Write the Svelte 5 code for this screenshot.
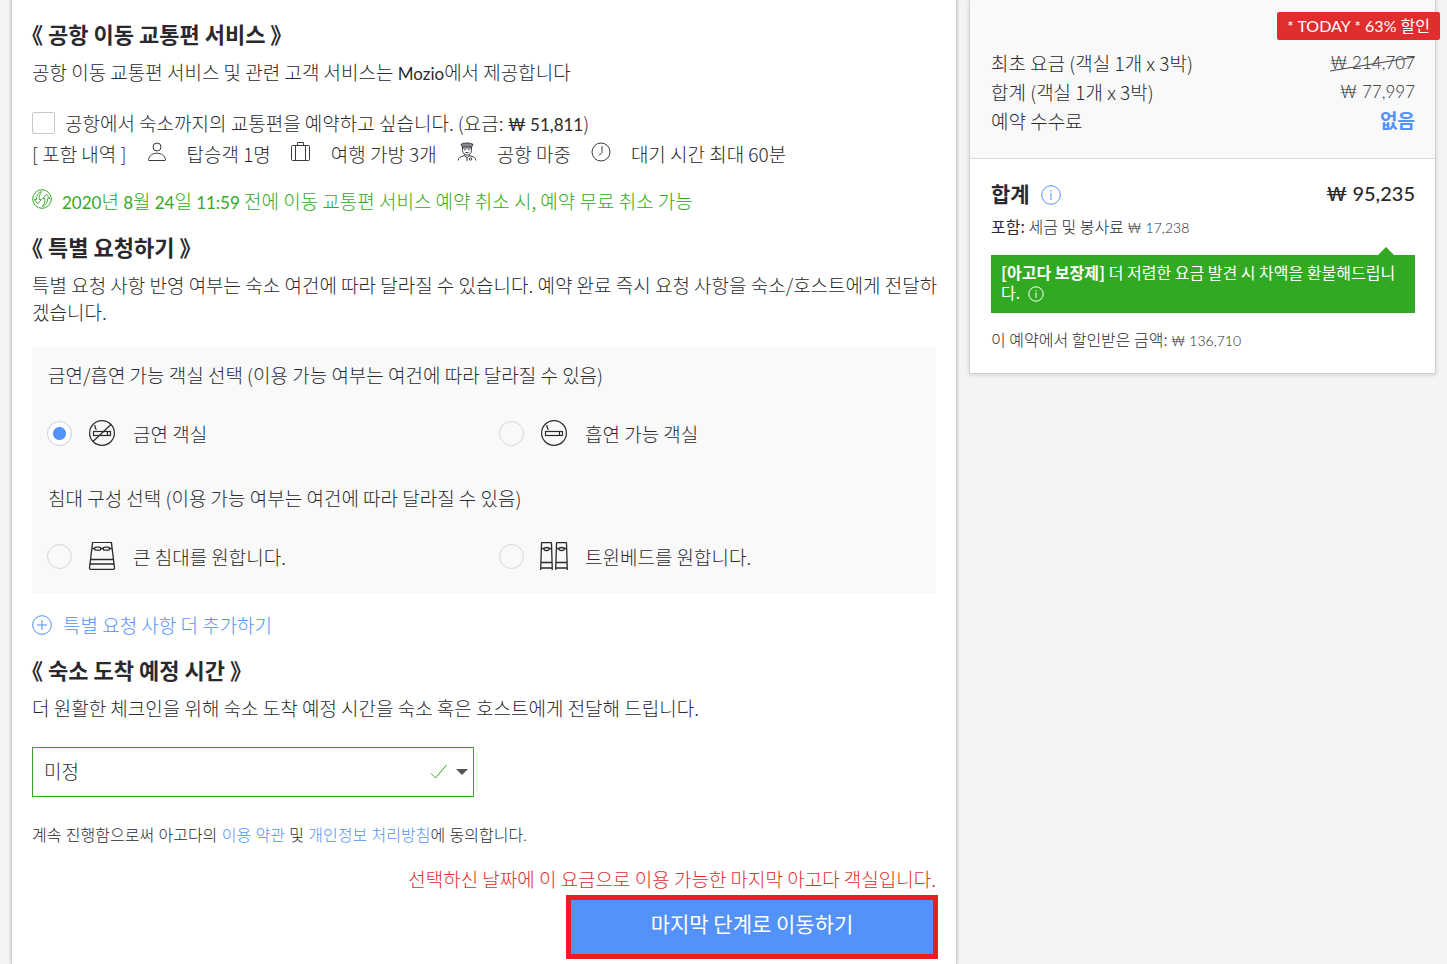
<script>
  let transfer = $state(false);
  let smoking = $state('non');
  let bed = $state('');
  let arrival = $state('미정');

  const included = [
    { icon: 'person', text: '탑승객 1명' },
    { icon: 'bag', text: '여행 가방 3개' },
    { icon: 'driver', text: '공항 마중' },
    { icon: 'clock', text: '대기 시간 최대 60분' },
  ];

  const arrivalTimes = ['미정', '14:00 - 15:00', '15:00 - 16:00', '16:00 - 17:00', '17:00 - 18:00'];
</script>

{#snippet cigarette(crossed)}
  <svg class="option-icon" width="28" height="28" viewBox="0 0 28 28" fill="none" stroke="#2a2a2e" stroke-width="1.2" aria-hidden="true">
    <circle cx="14" cy="14" r="12.4" />
    <rect x="5.5" y="12.5" width="17" height="4" />
    <path d="M19.500 12.500v4M8 11c.6-1.400-1.600-2-1-5" />
    {#if crossed}
      <path d="M5 22.500L23 5.500" />
    {/if}
  </svg>
{/snippet}

<div class="page">
  <main class="booking">
    <section>
      <h2>《 공항 이동 교통편 서비스 》</h2>
      <p>공항 이동 교통편 서비스 및 관련 고객 서비스는 <span class="latin">Mozio</span>에서 제공합니다</p>

      <label class="transfer">
        <input type="checkbox" bind:checked={transfer} />
        <span>공항에서 숙소까지의 교통편을 예약하고 싶습니다. (요금: <span class="latin">₩ 51,811</span>)</span>
      </label>

      <div class="included">
        <span>[ 포함 내역 ]</span>
        {#each included as item}
          <svg class="included-icon" width="20" height="20" viewBox="0 0 20 20" fill="none" stroke="#3c3c40" stroke-width="1" aria-hidden="true">
            {#if item.icon === 'person'}
              <circle cx="10" cy="5" r="4" />
              <path d="M2 18.500c-.4 0-.6-.3-.5-.8.6-4 4-6.500 8.500-6.500s7.900 2.500 8.500 6.500c.1.500-.1.800-.5.800z" />
            {:else if item.icon === 'bag'}
              <rect x=".5" y="3.500" width="18" height="15" rx="1" />
              <path d="M4.500 3.500v15M14.500 3.500v15M6.500 3.500v-3h6v3" />
            {:else if item.icon === 'driver'}
              <path d="M4 2.500C6 .5 14 .5 16 2.500l-1.200 2.300H5.200z" fill="#8c8c90" />
              <path d="M5.500 5v3.500c0 2.400 2 4.500 4.500 4.500s4.500-2.100 4.500-4.500V5M5.500 6h9M7.200 7.800h1.600M11.200 7.800h1.600M8.500 10.500h3" />
              <path d="M7.500 12.500v1.300L10 15.500l2.500-1.700v-1.300M7.500 13.800c-4 .5-6 1.700-6.500 4.700M12.500 13.800c4 .5 6 1.700 6.500 4.700M10 15.500v3.500" />
              <circle cx="13.500" cy="17" r="1.200" />
            {:else}
              <circle cx="10" cy="10" r="9" />
              <path d="M11 4v6.500l-3 3" />
            {/if}
          </svg>
          <span>{item.text}</span>
        {/each}
      </div>

      <div class="free-cancel">
        <svg class="raised" width="20" height="20" viewBox="0 0 20 20" fill="none" stroke="#32a923" aria-hidden="true">
          <circle cx="10" cy="10" r="9.300" />
          <path d="M9.500 2.500C6 3.500 4.300 6.500 4.500 10.500H2.300l3.500 4.200 3.500-4.200H7.200C7 7.500 7.800 5 9.500 2.500z" stroke-width=".9" />
          <path d="M10.500 17.500c2-2.300 2.700-4.800 2.300-8h-2l3.500-4.200 3.500 4.200h-2.200c.2 3.600-1.500 6.700-5.100 8z" stroke-width=".9" />
        </svg>
        <span><span class="latin">2020</span>년 <span class="latin">8</span>월 <span class="latin">24</span>일 <span class="latin">11:59</span> 전에 이동 교통편 서비스 예약 취소 시, 예약 무료 취소 가능</span>
      </div>
    </section>

    <section>
      <h2>《 특별 요청하기 》</h2>
      <p>특별 요청 사항 반영 여부는 숙소 여건에 따라 달라질 수 있습니다. 예약 완료 즉시 요청 사항을 숙소/호스트에게 전달하겠습니다.</p>

      <div class="panel">
        <div class="group" role="radiogroup" aria-labelledby="smoking-title">
          <div class="group-title" id="smoking-title">금연/흡연 가능 객실 선택 (이용 가능 여부는 여건에 따라 달라질 수 있음)</div>
          <div class="options">
            <label class="option">
              <input type="radio" name="smoking" value="non" bind:group={smoking} />
              {@render cigarette(true)}
              <span>금연 객실</span>
            </label>
            <label class="option">
              <input type="radio" name="smoking" value="smoking" bind:group={smoking} />
              {@render cigarette(false)}
              <span>흡연 가능 객실</span>
            </label>
          </div>
        </div>

        <div class="group" role="radiogroup" aria-labelledby="bed-title">
          <div class="group-title" id="bed-title">침대 구성 선택 (이용 가능 여부는 여건에 따라 달라질 수 있음)</div>
          <div class="options">
            <label class="option">
              <input type="radio" name="bed" value="large" bind:group={bed} />
              <svg class="option-icon" width="28" height="28" viewBox="0 0 28 28" fill="none" stroke="#2a2a2e" stroke-width="1.3" aria-hidden="true">
                <path d="M4.500 1.200c0-.6.4-.9 1-.9h17c.6 0 1 .3 1 .9l3 24.800c.1.800-.3 1.300-1 1.300h-23c-.7 0-1.100-.5-1-1.300z" />
                <path d="M4 6.500h3M12.500 6.500h3M21 6.500h3M2.300 17.500h23.400M1.800 22h24.400" />
                <rect x="6.700" y="5.200" width="6" height="3" rx="1.200" />
                <rect x="15.300" y="5.200" width="6" height="3" rx="1.200" />
              </svg>
              <span>큰 침대를 원합니다.</span>
            </label>
            <label class="option">
              <input type="radio" name="bed" value="twin" bind:group={bed} />
              <svg class="option-icon" width="28" height="28" viewBox="0 0 28 28" fill="none" stroke="#2a2a2e" stroke-width="1.3" aria-hidden="true">
                <path d="M.7 28L1.500 1.500c0-.7.3-1 1-1h8c.7 0 1 .3 1 1L12.300 28M.8 20.500h11.300M.7 26h11.500M1.500 6.500h2.300M9.300 6.500h2.300" />
                <ellipse cx="6.600" cy="7" rx="2.700" ry="1.500" />
                <path d="M15.700 28l.8-26.500c0-.7.3-1 1-1h8c.7 0 1 .3 1 1L27.300 28M15.800 20.500h11.300M15.700 26h11.500M16.500 6.500h2.300M24.300 6.500h2.300" />
                <ellipse cx="21.600" cy="7" rx="2.700" ry="1.500" />
              </svg>
              <span>트윈베드를 원합니다.</span>
            </label>
          </div>
        </div>
      </div>

      <button class="add-request" type="button">
        <svg width="20" height="20" viewBox="0 0 20 20" fill="none" stroke="#4f8df0" aria-hidden="true">
          <circle cx="10" cy="10" r="9.300" />
          <path d="M10 5v10M5 10h10" />
        </svg>
        <span>특별 요청 사항 더 추가하기</span>
      </button>
    </section>

    <section>
      <h2 id="arrival-title">《 숙소 도착 예정 시간 》</h2>
      <p>더 원활한 체크인을 위해 숙소 도착 예정 시간을 숙소 혹은 호스트에게 전달해 드립니다.</p>

      <div class="select-box">
        <select aria-labelledby="arrival-title" bind:value={arrival}>
          {#each arrivalTimes as time}
            <option value={time}>{time}</option>
          {/each}
        </select>
        <svg class="select-marks" width="40" height="16" viewBox="0 0 40 16" aria-hidden="true">
          <path d="M1 9.500l4.500 4.500L16.500 1" fill="none" stroke="#32a923" />
          <path d="M26 5h12l-6 6z" fill="#555" />
        </svg>
      </div>
    </section>

    <footer class="submit">
      <p class="terms">계속 진행함으로써 아고다의 <a href="#terms">이용 약관</a> 및 <a href="#privacy">개인정보 처리방침</a>에 동의합니다.</p>
      <p class="warning">선택하신 날짜에 이 요금으로 이용 가능한 마지막 아고다 객실입니다.</p>
      <button class="next" type="button">마지막 단계로 이동하기</button>
    </footer>
  </main>

  <aside class="summary">
    <div class="badge">* TODAY * 63% 할인</div>
    <dl class="prices">
      <div class="price-row">
        <dt>최초 요금 (객실 1개 x 3박)</dt>
        <dd class="original">
          ₩ 214,707
          <svg class="strike" viewBox="0 0 84 16" preserveAspectRatio="none" aria-hidden="true">
            <path d="M0 15L84 1" stroke="#444" />
          </svg>
        </dd>
      </div>
      <div class="price-row">
        <dt>합계 (객실 1개 x 3박)</dt>
        <dd>₩ 77,997</dd>
      </div>
      <div class="price-row">
        <dt>예약 수수료</dt>
        <dd class="none">없음</dd>
      </div>
    </dl>

    <div class="total">
      <div class="total-row">
        <strong>합계</strong>
        <svg class="info" width="20" height="20" viewBox="0 0 20 20" fill="none" stroke="#5392f9" aria-hidden="true">
          <circle cx="10" cy="10" r="9.300" />
          <path d="M10 8v7M10 5v1.500" />
        </svg>
        <span class="amount">₩ 95,235</span>
      </div>
      <p class="small"><b>포함:</b> 세금 및 봉사료 <span class="won">₩ 17,238</span></p>
      <div class="guarantee">
        <b>[아고다 보장제]</b> 더 저렴한 요금 발견 시 차액을 환불해드립니다.
        <svg class="guarantee-info" width="16" height="16" viewBox="0 0 16 16" fill="none" stroke="#fff" aria-hidden="true">
          <circle cx="8" cy="8" r="7.200" />
          <path d="M8 6.500V12M8 4v1.300" />
        </svg>
      </div>
      <p class="small">이 예약에서 할인받은 금액: <span class="won">₩ 136,710</span></p>
    </div>
  </aside>
</div>

<style>
  :global(body) {
    background: #f4f4f4;
  }

  .page {
    display: grid;
    grid-template-columns: minmax(0, 944fr) minmax(0, 467fr);
    gap: 13px;
    align-items: start;
    padding: 0 11px 0 12px;
    font-family: "Noto Sans CJK KR", sans-serif;
    font-size: 19px;
    font-weight: 300;
    line-height: 27px;
    color: #2a2a2e;
  }

  h2, p, dl, dd {
    margin: 0;
  }
  button, select, input {
    margin: 0;
    font: inherit;
    color: inherit;
  }
  svg {
    flex-shrink: 0;
  }
  .latin {
    font-family: Lato, "Noto Sans CJK KR", sans-serif;
    font-size: 17px;
    font-weight: 400;
    line-height: 1;
  }

  .booking {
    box-sizing: border-box;
    min-height: 100vh;
    padding: 18px 20px 5px;
    background: #fff;
    box-shadow: 0 0 3px 1px rgba(0, 0, 0, 0.25);
  }
  h2 {
    margin-bottom: 10px;
    font-size: 22px;
    font-weight: 700;
    line-height: 30px;
    font-feature-settings: "halt";
  }
  section + section {
    margin-top: 16px;
  }
  section p {
    margin-right: -4px;
  }

  .transfer {
    display: flex;
    align-items: center;
    gap: 10px;
    margin-top: 24px;
  }
  .transfer input {
    appearance: none;
    box-sizing: border-box;
    width: 23px;
    height: 22px;
    border: 1px solid #c8c8cc;
    border-radius: 2px;
    background: #fff;
  }
  .transfer input:checked {
    background: #5392f9;
  }

  .included {
    display: flex;
    flex-wrap: wrap;
    align-items: center;
    column-gap: 20px;
    margin-top: 4px;
  }
  .included-icon {
    margin-bottom: 4px;
  }

  .free-cancel {
    display: flex;
    align-items: center;
    gap: 10px;
    margin: 20px 0 17px;
    color: #32a923;
  }
  .raised {
    margin-bottom: 4px;
  }

  .panel {
    margin-top: 22px;
    background: #f9f9f9;
  }
  .group {
    padding: 14px 0 22px;
  }
  .group-title {
    padding: 0 16px;
  }
  .options {
    display: grid;
    grid-template-columns: 1fr 1fr;
    margin-top: 30px;
  }
  .option {
    display: flex;
    align-items: center;
    height: 30px;
    padding-left: 15px;
  }
  .option input {
    appearance: none;
    box-sizing: border-box;
    width: 25px;
    height: 25px;
    border: 1px solid #d4d6da;
    border-radius: 50%;
  }
  .option input:checked {
    border-color: #c8d0e0;
    background: radial-gradient(circle, #5392f9 6px, #fff 7px);
  }
  .option-icon {
    margin: 0 17px 0 16px;
  }

  .add-request {
    display: flex;
    align-items: center;
    gap: 11px;
    margin-top: 18px;
    padding: 0;
    border: 0;
    background: none;
    color: #5392f9;
    cursor: pointer;
  }

  .select-box {
    position: relative;
    width: calc(50% - 10px);
    margin-top: 26px;
  }
  select {
    appearance: none;
    display: block;
    box-sizing: border-box;
    width: 100%;
    height: 50px;
    padding: 0 60px 4px 11px;
    border: 1px solid #32a923;
    border-radius: 0;
    background: #fff;
  }
  .select-marks {
    position: absolute;
    top: 17px;
    right: 4px;
    pointer-events: none;
  }

  .submit {
    display: flex;
    flex-direction: column;
    align-items: flex-end;
    margin-top: 26px;
  }
  .terms {
    align-self: flex-start;
    font-family: Lato, "Noto Sans CJK KR", sans-serif;
    font-size: 16px;
    line-height: 24px;
  }
  a {
    color: #5392f9;
    text-decoration: none;
  }
  .warning {
    margin-top: 18px;
    color: #e12d2d;
  }
  .next {
    width: 372px;
    height: 64px;
    margin: 3px -2px 0 0;
    padding-bottom: 8px;
    border: 5px solid #ed1c24;
    background: #5392f9;
    color: #fff;
    font-size: 21px;
    font-weight: 400;
    cursor: pointer;
  }

  .summary {
    position: relative;
    border: 1px solid #cdd2da;
    border-top: 0;
    background: #fff;
    box-shadow: 0 1px 4px rgba(0, 0, 0, 0.15);
  }
  .badge {
    position: absolute;
    top: 12px;
    right: -5px;
    padding: 0 10px;
    border-radius: 2px;
    background: #e12d2d;
    color: #fff;
    font-family: Lato, "Noto Sans CJK KR", sans-serif;
    font-size: 16px;
    font-weight: 400;
    line-height: 28px;
  }
  .prices {
    padding: 48px 20px 23px 21px;
    border-bottom: 1px solid #d8dade;
    background: #f9f9f9;
    line-height: 29px;
  }
  .price-row {
    display: flex;
    justify-content: space-between;
  }
  .price-row dd {
    font-family: Lato, "Noto Sans CJK KR", sans-serif;
    font-size: 17px;
  }
  .original {
    position: relative;
  }
  .strike {
    position: absolute;
    top: 8px;
    left: 0;
    width: 100%;
    height: 16px;
  }
  .price-row .none {
    color: #5392f9;
    font-size: 19px;
    font-weight: 700;
  }

  .total {
    padding: 19px 20px 22px 21px;
  }
  .total-row {
    display: flex;
    align-items: center;
    gap: 11px;
    font-size: 21px;
    line-height: 30px;
  }
  .total-row strong {
    font-weight: 700;
  }
  .info {
    margin-top: 4px;
  }
  .amount {
    margin-left: auto;
    font-family: Lato, "Noto Sans CJK KR", sans-serif;
    font-size: 20px;
    font-weight: 500;
  }
  .small {
    margin-top: 6px;
    font-size: 16px;
    line-height: 24px;
  }
  .small b {
    font-weight: 400;
  }
  .won {
    font-family: Lato, "Noto Sans CJK KR", sans-serif;
    font-size: 14px;
    line-height: 1;
  }
  .guarantee {
    position: relative;
    margin: 17px 0 14px;
    padding: 7px 8px 11px 10px;
    background: #32a923;
    color: #fff;
    font-size: 16px;
    font-weight: 400;
    line-height: 20px;
    word-break: break-all;
  }
  .guarantee::before {
    content: "";
    position: absolute;
    top: -8px;
    right: 21px;
    border: 8px solid transparent;
    border-top: 0;
    border-bottom-color: #32a923;
  }
  .guarantee b {
    font-weight: 700;
  }
  .guarantee-info {
    margin-left: 4px;
    vertical-align: -3px;
  }
</style>
